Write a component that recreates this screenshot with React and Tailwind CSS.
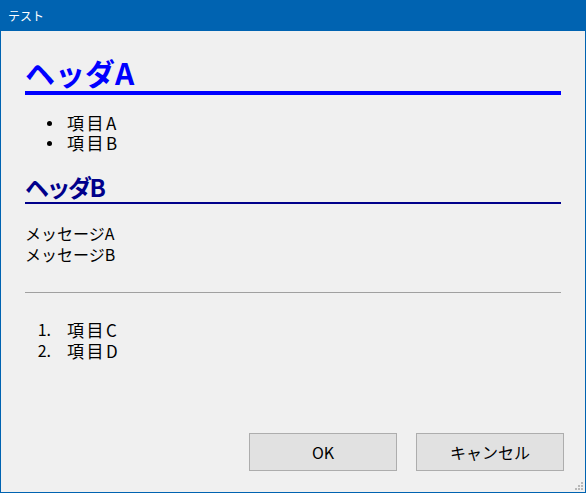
export default function App() {
  const font = { fontFamily: '"Noto Sans CJK JP", "Noto Sans", sans-serif' };
  return (
    <div
      className="w-[586px] h-[493px] flex flex-col bg-[#f0f0f0] border border-t-0 border-[#0063b1] relative overflow-hidden"
      style={font}
    >
      <div className="h-[31px] shrink-0 bg-[#0063b1] flex items-center pl-[7px] text-white text-[12px] leading-none">
        テスト
      </div>
      <div className="flex-1 flex flex-col px-[24px] text-black">
        <h1 className="mt-[23px] text-[30px] leading-[36px] font-bold text-[#0000ff] border-b-4 border-[#0000ff] pb-[1px]">
          ヘッダA
        </h1>
        <ul className="mt-[18px] text-[17px] leading-[20px]">
          <li className="flex items-center">
            <span className="w-[42px] flex justify-end pr-[15px]">
              <span className="w-[5px] h-[5px] rounded-full bg-black"></span>
            </span>
            <span className="tracking-[2.5px]">項目A</span>
          </li>
          <li className="flex items-center">
            <span className="w-[42px] flex justify-end pr-[15px]">
              <span className="w-[5px] h-[5px] rounded-full bg-black"></span>
            </span>
            <span className="tracking-[2.5px]">項目B</span>
          </li>
        </ul>
        <h2 className="mt-[19px] text-[24px] leading-[30px] font-bold text-[#00008b] border-b-2 border-[#00008b] tracking-[-2.5px]">
          ヘッダB
        </h2>
        <div className="mt-[19px] text-[16px] leading-[21px]">
          <div>メッセージA</div>
          <div>メッセージB</div>
        </div>
        <div className="mt-[27px] h-px bg-[#a0a0a0]"></div>
        <ol className="mt-[26px] text-[17px] leading-[21px]">
          <li className="flex">
            <span className="w-[42px] text-right pr-[16px] text-[16px]">1.</span>
            <span className="tracking-[2.5px]">項目C</span>
          </li>
          <li className="flex">
            <span className="w-[42px] text-right pr-[16px] text-[16px]">2.</span>
            <span className="tracking-[2.5px]">項目D</span>
          </li>
        </ol>
        <div className="flex-1"></div>
        <div className="flex justify-end gap-[19px] pb-[21px] -mr-[3px]">
          <button className="w-[148px] h-[38px] bg-[#e1e1e1] border border-[#adadad] text-[16px] text-black">
            OK
          </button>
          <button className="w-[148px] h-[38px] bg-[#e1e1e1] border border-[#adadad] text-[16px] text-black">
            キャンセル
          </button>
        </div>
      </div>
      <div className="absolute right-[2px] bottom-[2px] grid grid-cols-3 gap-[1px] w-[8px] h-[8px]">
        <span></span><span></span><span className="w-[2px] h-[2px] bg-[#b8b8b8]"></span>
        <span></span><span className="w-[2px] h-[2px] bg-[#b8b8b8]"></span><span className="w-[2px] h-[2px] bg-[#b8b8b8]"></span>
        <span className="w-[2px] h-[2px] bg-[#b8b8b8]"></span><span className="w-[2px] h-[2px] bg-[#b8b8b8]"></span><span className="w-[2px] h-[2px] bg-[#b8b8b8]"></span>
      </div>
    </div>
  );
}
